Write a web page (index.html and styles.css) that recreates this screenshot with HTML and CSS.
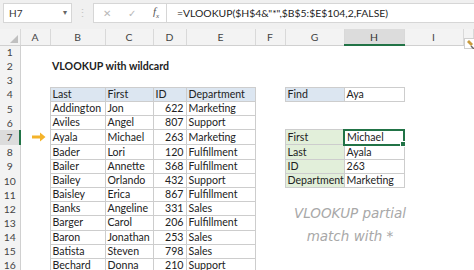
FILE: index.html
```html
<!DOCTYPE html>
<html lang="en">
<head>
    <meta charset="UTF-8">
    <title>VLOOKUP with wildcard</title>
    <link rel="stylesheet" href="styles.css">
</head>
<body>
    <div class="toolbar">
        <div class="namebox">H7<span class="drop">&#9662;</span></div>
        <div class="dots">&#8942;</div>
        <div class="fbar">
            <div class="fbtns">
                <span class="ico">&#10005;</span>
                <span class="ico">&#10003;</span>
                <span class="fx">f<sub>x</sub></span>
            </div>
            <div class="formula">=VLOOKUP($H$4&amp;"*",$B$5:$E$104,2,FALSE)</div>
        </div>
    </div>

    <table class="sheet">
        <colgroup>
            <col class="w-hd"><col class="w-a"><col class="w-b"><col class="w-c"><col class="w-d">
            <col class="w-e"><col class="w-f"><col class="w-g"><col class="w-h"><col class="w-i"><col>
        </colgroup>
        <thead>
            <tr>
                <th class="corner"><span class="tri"></span></th>
                <th>A</th><th>B</th><th>C</th><th>D</th><th>E</th><th>F</th><th>G</th>
                <th class="sel">H</th><th>I</th><th></th>
            </tr>
        </thead>
        <tbody>
            <tr><th>1</th><td></td><td></td><td></td><td></td><td></td><td></td><td></td><td></td><td></td><td></td></tr>
            <tr><th>2</th><td></td><td class="title">VLOOKUP with wildcard</td><td></td><td></td><td></td><td></td><td></td><td></td><td></td><td></td></tr>
            <tr><th>3</th><td></td><td></td><td></td><td></td><td></td><td></td><td></td><td></td><td></td><td></td></tr>
            <tr><th>4</th><td></td><td class="b hd">Last</td><td class="b hd">First</td><td class="b hd">ID</td><td class="b hd">Department</td><td></td><td class="b hd">Find</td><td class="b">Aya</td><td></td><td></td></tr>
            <tr><th>5</th><td></td><td class="b">Addington</td><td class="b">Jon</td><td class="b num">622</td><td class="b">Marketing</td><td></td><td></td><td></td><td></td><td></td></tr>
            <tr><th>6</th><td></td><td class="b">Aviles</td><td class="b">Angel</td><td class="b num">807</td><td class="b">Support</td><td></td><td></td><td></td><td></td><td></td></tr>
            <tr><th class="rsel">7</th><td class="arrow-cell"><svg class="arrow" width="14" height="10" viewBox="0 0 14 10"><path d="M0 3.5 H8 V0.5 L13.5 5 L8 9.5 V6.5 H0 Z" fill="#f4b32a"/></svg></td><td class="b">Ayala</td><td class="b">Michael</td><td class="b num">263</td><td class="b">Marketing</td><td></td><td class="b lbl">First</td><td class="b cur">Michael<span class="handle"></span></td><td></td><td></td></tr>
            <tr><th>8</th><td></td><td class="b">Bader</td><td class="b">Lori</td><td class="b num">120</td><td class="b">Fulfillment</td><td></td><td class="b lbl">Last</td><td class="b">Ayala</td><td></td><td></td></tr>
            <tr><th>9</th><td></td><td class="b">Bailer</td><td class="b">Annette</td><td class="b num">368</td><td class="b">Fulfillment</td><td></td><td class="b lbl">ID</td><td class="b">263</td><td></td><td></td></tr>
            <tr><th>10</th><td></td><td class="b">Bailey</td><td class="b">Orlando</td><td class="b num">432</td><td class="b">Support</td><td></td><td class="b lbl">Department</td><td class="b">Marketing</td><td></td><td></td></tr>
            <tr><th>11</th><td></td><td class="b">Baisley</td><td class="b">Erica</td><td class="b num">867</td><td class="b">Fulfillment</td><td></td><td></td><td></td><td></td><td></td></tr>
            <tr><th>12</th><td></td><td class="b">Banks</td><td class="b">Angeline</td><td class="b num">331</td><td class="b">Sales</td><td></td><td></td><td></td><td></td><td></td></tr>
            <tr><th>13</th><td></td><td class="b">Barger</td><td class="b">Carol</td><td class="b num">206</td><td class="b">Fulfillment</td><td></td><td></td><td></td><td></td><td></td></tr>
            <tr><th>14</th><td></td><td class="b">Baron</td><td class="b">Jonathan</td><td class="b num">253</td><td class="b">Sales</td><td></td><td></td><td></td><td></td><td></td></tr>
            <tr><th>15</th><td></td><td class="b">Batista</td><td class="b">Steven</td><td class="b num">798</td><td class="b">Sales</td><td></td><td></td><td></td><td></td><td></td></tr>
            <tr><th>16</th><td></td><td class="b">Bechard</td><td class="b">Donna</td><td class="b num">210</td><td class="b">Support</td><td></td><td></td><td></td><td></td><td></td></tr>
        </tbody>
    </table>

    <div class="note">VLOOKUP partial<br>match with *</div>
    <div class="paste"><svg width="10" height="9" viewBox="0 0 10 9"><path d="M1 2 L5 6 L7 4 L3 0 Z" fill="#c89a3c"/><path d="M5 6 L8 9" stroke="#666" stroke-width="1.4"/></svg></div>
</body>
</html>
```

FILE: styles.css
```css
body {
    margin: 0;
    width: 474px;
    height: 270px;
    overflow: hidden;
    background: #fff;
    font-family: Lato, "Open Sans", sans-serif;
    position: relative;
}

/* formula bar strip */
.toolbar {
    height: 29px;
    background: #f0f0f0;
    display: flex;
    align-items: flex-start;
    padding: 3px 0 0 3px;
    box-sizing: border-box;
}
.namebox {
    width: 69px;
    height: 20px;
    box-sizing: border-box;
    background: #fff;
    border: 1px solid #d6d6d6;
    font-size: 10px;
    color: #333;
    padding: 3px 0 0 5px;
    position: relative;
}
.drop {
    position: absolute;
    right: 4px;
    top: 3px;
    font-size: 8px;
    color: #666;
}
.dots {
    width: 21px;
    text-align: center;
    color: #c4c4c4;
    font-size: 11px;
    line-height: 20px;
}
.fbar {
    flex: 1;
    height: 20px;
    display: flex;
    background: #fff;
    border: 1px solid #d6d6d6;
    border-right: none;
    box-sizing: border-box;
}
.fbtns {
    width: 73px;
    display: flex;
    align-items: center;
    border-right: 1px solid #d6d6d6;
    padding-left: 9px;
    box-sizing: border-box;
}
.ico {
    color: #b8b8b8;
    font-size: 10px;
    width: 25px;
}
.fx {
    font-family: "Liberation Serif", serif;
    font-style: italic;
    color: #555;
    font-size: 11px;
}
.fx sub {
    font-size: 7px;
}
.formula {
    padding: 3px 0 0 10px;
    font-size: 10.4px;
    color: #222;
    white-space: nowrap;
}

/* grid */
.sheet {
    border-collapse: collapse;
    table-layout: fixed;
    width: 474px;
    font-size: 10.6px;
    color: #222;
}
.w-hd { width: 20px; }
.w-a { width: 30px; }
.w-b { width: 55px; }
.w-c { width: 48px; }
.w-d { width: 33px; }
.w-e { width: 69px; }
.w-f { width: 30px; }
.w-g { width: 59px; }
.w-h { width: 60px; }
.w-i { width: 59px; }

thead th {
    height: 15px;
    background: #f3f3f3;
    border-right: 1px solid #d9d9d9;
    border-bottom: 1px solid #d0d0d0;
    font-weight: normal;
    font-size: 10.4px;
    color: #444;
    padding: 0;
}
thead th.sel {
    background: #dcdcdc;
    border-bottom: 2px solid #217346;
    color: #333;
}
.corner {
    position: relative;
}
.tri {
    position: absolute;
    right: 2px;
    bottom: 2px;
    width: 0;
    height: 0;
    border-left: 8px solid transparent;
    border-bottom: 8px solid #c0c0c0;
}
tbody tr {
    height: 14.15px;
}
tbody th {
    background: #f3f3f3;
    border-right: 1px solid #d0d0d0;
    font-weight: normal;
    font-size: 10.4px;
    color: #444;
    padding: 0;
}
tbody th.rsel {
    background: #dcdcdc;
    border-right: 2px solid #217346;
}
td {
    padding: 0 0 0 2px;
    white-space: nowrap;
    line-height: 13px;
}
td.b {
    border: 1px solid #cdcdcd;
}
td.hd {
    background: #dce6f1;
}
td.lbl {
    background: #e2efda;
}
td.num {
    text-align: right;
    padding: 0 2px 0 0;
}
.title {
    font-weight: bold;
    overflow: visible;
}
td.cur {
    border: 2px solid #217346;
    position: relative;
}
.handle {
    position: absolute;
    right: -3px;
    bottom: -3px;
    width: 4px;
    height: 4px;
    background: #217346;
    border: 1px solid #fff;
}
.arrow-cell {
    padding: 0 0 0 11px;
}
.arrow {
    display: block;
}

.note {
    position: absolute;
    left: 282px;
    top: 202px;
    width: 136px;
    text-align: center;
    font-family: "DejaVu Sans", sans-serif;
    font-weight: 200;
    font-style: italic;
    font-size: 13.5px;
    line-height: 23px;
    color: #a8a8a8;
}
.paste {
    position: absolute;
    left: 464px;
    top: 38px;
    width: 12px;
    height: 11px;
    box-sizing: border-box;
    background: #fff;
    border: 1px solid #cfcfcf;
    padding: 1px 0 0 1px;
}
.paste svg {
    display: block;
}
```
